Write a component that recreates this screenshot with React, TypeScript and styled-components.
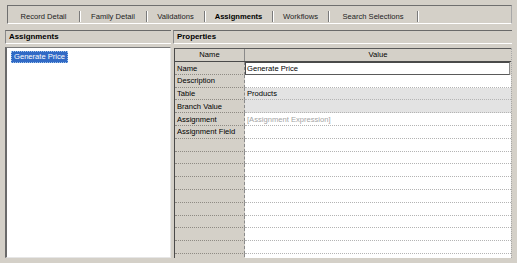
import React from 'react';
import styled, { createGlobalStyle } from 'styled-components';

const Global = createGlobalStyle`
  html, body { margin: 0; padding: 0; background: #d4d0c8; }
  #root { width: 517px; height: 263px; }
`;

const Frame = styled.div`
  width: 517px;
  height: 263px;
  box-sizing: border-box;
  padding: 5px 5px 5px 5px;
  background: #d4d0c8;
  font-family: "Liberation Sans", Arial, sans-serif;
  font-size: 7.6px;
  color: #000;
  display: flex;
  flex-direction: column;
  overflow: hidden;
`;

const TabBar = styled.div`
  margin-left: 2px;
  height: 19px;
  box-sizing: border-box;
  border-top: 1px solid #6f6f6f;
  border-left: 1px solid #6f6f6f;
  border-bottom: 1px solid #ffffff;
  border-right: 1px solid #a8a8a8;
  display: flex;
  align-items: flex-start;
`;

const Tab = styled.div<{ $w: number; $active?: boolean }>`
  width: ${(p) => p.$w}px;
  height: 11px;
  margin-top: 5px;
  box-sizing: border-box;
  border-right: 1px solid #7a7a7a;
  box-shadow: 1px 0 0 #ffffff;
  display: flex;
  align-items: center;
  justify-content: center;
  white-space: nowrap;
  font-weight: ${(p) => (p.$active ? 700 : 400)};
  color: ${(p) => (p.$active ? '#000' : '#222')};
  line-height: 11px;
`;

const Panels = styled.div`
  margin-top: 6px;
  flex: 1;
  min-height: 0;
  display: flex;
  gap: 2px;
`;

const Panel = styled.div<{ $w: number }>`
  width: ${(p) => p.$w}px;
  display: flex;
  flex-direction: column;
  min-height: 0;
`;

const PanelHeader = styled.div`
  height: 14px;
  flex: none;
  box-sizing: border-box;
  border-top: 1px solid #6a6a6a;
  border-left: 1px solid #8a8a8a;
  border-bottom: 1px solid #ffffff;
  padding-left: 3px;
  display: flex;
  align-items: center;
  font-weight: 700;
  font-size: 7.9px;
  line-height: 12px;
`;

const List = styled.div`
  margin-top: 3px;
  flex: 1;
  min-height: 0;
  box-sizing: border-box;
  background: #ffffff;
  border-top: 1px solid #7a7a7a;
  border-left: 2px solid #6a6a6a;
  border-right: 1px solid #e6e6e6;
  border-bottom: 1px solid #e6e6e6;
  padding: 3px 0 0 4px;
`;

const ListItem = styled.div<{ $selected?: boolean }>`
  display: inline-block;
  height: 12px;
  line-height: 11px;
  box-sizing: border-box;
  padding: 0 3px;
  background: ${(p) => (p.$selected ? '#316ac5' : 'transparent')};
  color: ${(p) => (p.$selected ? '#ffffff' : '#000')};
  outline: 1px dotted ${(p) => (p.$selected ? '#9fc3ea' : 'transparent')};
  outline-offset: -1px;
  white-space: nowrap;
`;

const Grid = styled.div`
  margin-top: 4px;
  margin-left: 1px;
  flex: 1;
  min-height: 0;
  overflow: hidden;
  box-sizing: border-box;
  border-left: 1px solid #4a4a4a;
  border-right: 1px dotted #a8a8a8;
  display: flex;
  flex-direction: column;
`;

const HeaderRow = styled.div`
  height: 14px;
  flex: none;
  box-sizing: border-box;
  border-top: 1px solid #5a5a5a;
  border-bottom: 1px solid #4a4a4a;
  display: grid;
  grid-template-columns: 70px 1fr;
  background: #d4d0c8;
`;

const HeaderCell = styled.div<{ $sep?: boolean }>`
  display: flex;
  align-items: center;
  justify-content: center;
  line-height: 12px;
  box-sizing: border-box;
  border-right: ${(p) => (p.$sep ? '1px solid #8a8a8a' : 'none')};
`;

const Row = styled.div`
  height: 12.8px;
  flex: none;
  display: grid;
  grid-template-columns: 70px 1fr;
`;

const NameCell = styled.div`
  box-sizing: border-box;
  background: #d4d0c8;
  border-right: 1px dashed #8a8a8a;
  border-bottom: 1px dotted #8f8b84;
  padding-left: 2px;
  display: flex;
  align-items: center;
  white-space: nowrap;
  line-height: 11px;
`;

type Kind = 'plain' | 'shade' | 'hint' | 'edit';

const ValueCell = styled.div<{ $kind: Kind }>`
  box-sizing: border-box;
  background: ${(p) => (p.$kind === 'shade' ? '#e3e3e3' : '#ffffff')};
  border-bottom: 1px dotted #b4b4b4;
  padding-left: 2px;
  display: flex;
  align-items: center;
  white-space: nowrap;
  line-height: 11px;
  color: ${(p) => (p.$kind === 'hint' ? '#a4a4a4' : '#000')};
`;

const EditBox = styled.div`
  box-sizing: border-box;
  margin-right: 1px;
  background: #ffffff;
  border-top: 1px solid #4a4a4a;
  border-left: 1px solid #4a4a4a;
  border-bottom: 1px solid #5a5a5a;
  border-right: 1px solid #8a8a8a;
  padding-left: 1px;
  display: flex;
  align-items: center;
  white-space: nowrap;
  line-height: 11px;
`;

const tabs = [
  { label: 'Record Detail', w: 72 },
  { label: 'Family Detail', w: 67 },
  { label: 'Validations', w: 58 },
  { label: 'Assignments', w: 68, active: true },
  { label: 'Workflows', w: 56 },
  { label: 'Search Selections', w: 89 },
];

const rows: { name: string; value: string; kind: Kind }[] = [
  { name: 'Name', value: 'Generate Price', kind: 'edit' },
  { name: 'Description', value: '', kind: 'plain' },
  { name: 'Table', value: 'Products', kind: 'shade' },
  { name: 'Branch Value', value: '', kind: 'shade' },
  { name: 'Assignment', value: '[Assignment Expression]', kind: 'hint' },
  { name: 'Assignment Field', value: '', kind: 'plain' },
  ...Array.from({ length: 11 }, () => ({ name: '', value: '', kind: 'plain' as Kind })),
];

export default function App() {
  return (
    <>
      <Global />
      <Frame>
        <TabBar>
          {tabs.map((t) => (
            <Tab key={t.label} $w={t.w} $active={t.active}>
              {t.label}
            </Tab>
          ))}
        </TabBar>
        <Panels>
          <Panel $w={166}>
            <PanelHeader>Assignments</PanelHeader>
            <List>
              <ListItem $selected>Generate Price</ListItem>
            </List>
          </Panel>
          <Panel $w={339}>
            <PanelHeader>Properties</PanelHeader>
            <Grid>
              <HeaderRow>
                <HeaderCell $sep>Name</HeaderCell>
                <HeaderCell>Value</HeaderCell>
              </HeaderRow>
              {rows.map((r, i) => (
                <Row key={i}>
                  <NameCell>{r.name}</NameCell>
                  {r.kind === 'edit' ? (
                    <EditBox>{r.value}</EditBox>
                  ) : (
                    <ValueCell $kind={r.kind}>{r.value}</ValueCell>
                  )}
                </Row>
              ))}
            </Grid>
          </Panel>
        </Panels>
      </Frame>
    </>
  );
}
